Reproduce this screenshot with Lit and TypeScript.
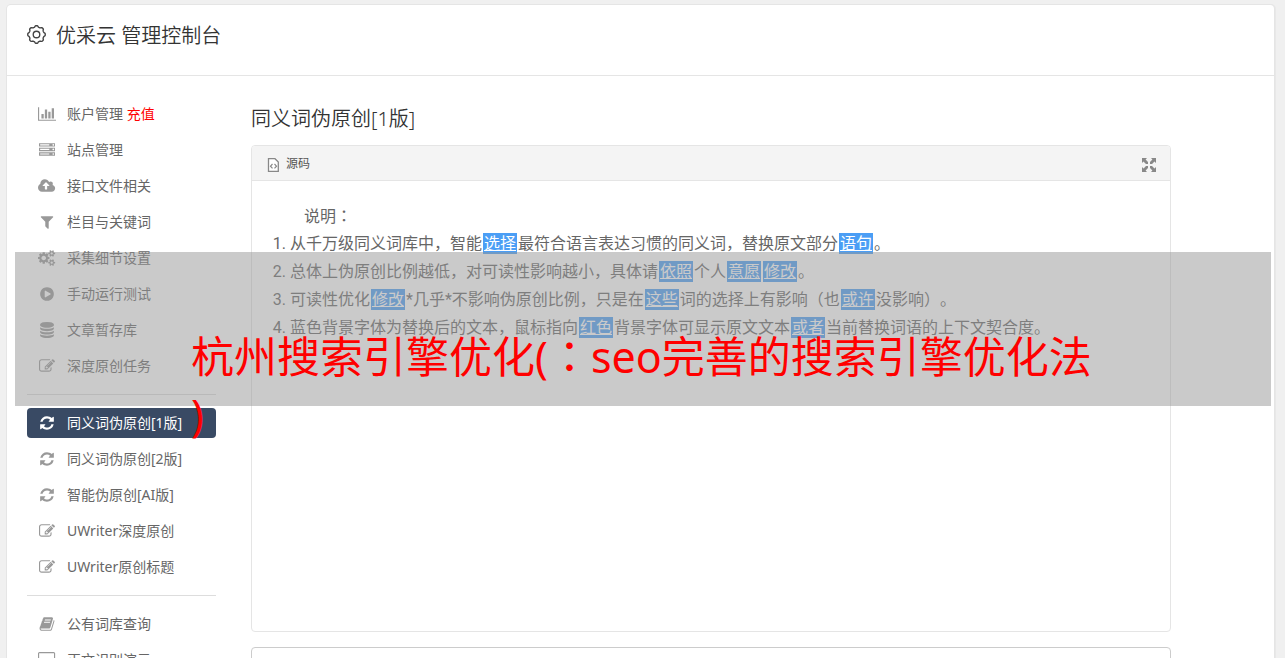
import { LitElement, html, svg, css } from "lit";
import { customElement, property } from "lit/decorators.js";

interface Glyph {
  w: number;
  d: string;
}

const GLYPHS: Record<string, Glyph> = {
  chart: {
    w: 2048,
    d: "M640 896v512h-256v-512h256zm384-512v1024h-256v-1024h256zm1024 1152v128h-2048v-1536h128v1408h1920zm-640-896v768h-256v-768h256zm384-384v1152h-256v-1152h256z",
  },
  server: {
    w: 1792,
    d: "M128 1408h1024v-128h-1024v128zm0-512h1024v-128h-1024v128zm1568 448q0-40-28-68t-68-28-68 28-28 68 28 68 68 28 68-28 28-68zm-1568-960h1024v-128h-1024v128zm1568 448q0-40-28-68t-68-28-68 28-28 68 28 68 68 28 68-28 28-68zm0-512q0-40-28-68t-68-28-68 28-28 68 28 68 68 28 68-28 28-68zm96 832v384h-1792v-384h1792zm0-512v384h-1792v-384h1792zm0-512v384h-1792v-384h1792z",
  },
  cloud: {
    w: 1920,
    d: "M1280 864q0-14-9-23l-352-352q-9-9-23-9t-23 9l-351 351q-10 12-10 24 0 14 9 23t23 9h224v352q0 13 9.5 22.5t22.5 9.5h192q13 0 22.5-9.5t9.5-22.5v-352h224q13 0 22.5-9.5t9.5-22.5zm640 288q0 159-112.5 271.5t-271.5 112.5h-1088q-185 0-316.5-131.5t-131.5-316.5q0-130 70-240t188-165q-2-30-2-43 0-212 150-362t362-150q156 0 285.5 87t188.5 231q71-62 166-62 106 0 181 75t75 181q0 76-41 138 130 31 213.5 135.5t83.5 238.5z",
  },
  filter: {
    w: 1792,
    d: "M1595 295q17 41-14 70l-493 493v742q0 42-39 59-13 5-25 5-27 0-45-19l-256-256q-19-19-19-45v-486l-493-493q-31-29-14-70 17-39 59-39h1280q42 0 59 39z",
  },
  cogs: {
    w: 1920,
    d: "M896 896q0-106-75-181t-181-75-181 75-75 181 75 181 181 75 181-75 75-181zm768 512q0-52-38-90t-90-38-90 38-38 90q0 53 37.5 90.5t90.5 37.5 90.5-37.5 37.5-90.5zm0-1024q0-52-38-90t-90-38-90 38-38 90q0 53 37.5 90.5t90.5 37.5 90.5-37.5 37.5-90.5zm-384 421v185q0 10-7 19.5t-16 10.5l-155 24q-11 35-32 76 34 48 90 115 7 11 7 20 0 12-7 19-23 30-82.5 89.5t-78.5 59.5q-11 0-21-7l-115-90q-37 19-77 31-11 108-23 155-7 24-30 24h-186q-11 0-20-7.5t-10-17.5l-23-153q-34-10-75-31l-118 89q-7 7-20 7-11 0-21-8-144-133-144-160 0-9 7-19 10-14 41-53t47-61q-23-44-35-82l-152-24q-10-1-17-9.5t-7-19.5v-185q0-10 7-19.5t16-10.5l155-24q11-35 32-76-34-48-90-115-7-11-7-20 0-12 7-20 22-30 82-89t79-59q11 0 21 7l115 90q34-18 77-32 11-108 23-154 7-24 30-24h186q11 0 20 7.5t10 17.5l23 153q34 10 75 31l118-89q8-7 20-7 11 0 21 8 144 133 144 160 0 8-7 19-12 16-42 54t-45 60q23 48 34 82l152 23q10 2 17 10.5t7 19.5zm640 533v140q0 16-149 31-12 27-30 52 51 113 51 138 0 4-4 7-122 71-124 71-8 0-46-47t-52-68q-20 2-30 2t-30-2q-14 21-52 68t-46 47q-2 0-124-71-4-3-4-7 0-25 51-138-18-25-30-52-149-15-149-31v-140q0-16 149-31 13-29 30-52-51-113-51-138 0-4 4-7 4-2 35-20t59-34 30-16q8 0 46 46.5t52 67.5q20-2 30-2t30 2q51-71 92-112l6-2q4 0 124 70 4 3 4 7 0 25-51 138 17 23 30 52 149 15 149 31zm0-1024v140q0 16-149 31-12 27-30 52 51 113 51 138 0 4-4 7-122 71-124 71-8 0-46-47t-52-68q-20 2-30 2t-30-2q-14 21-52 68t-46 47q-2 0-124-71-4-3-4-7 0-25 51-138-18-25-30-52-149-15-149-31v-140q0-16 149-31 13-29 30-52-51-113-51-138 0-4 4-7 4-2 35-20t59-34 30-16q8 0 46 46.5t52 67.5q20-2 30-2t30 2q51-71 92-112l6-2q4 0 124 70 4 3 4 7 0 25-51 138 17 23 30 52 149 15 149 31z",
  },
  play: {
    w: 1792,
    d: "M896 128q209 0 385.5 103t279.5 279.5 103 385.5-103 385.5-279.5 279.5-385.5 103-385.5-103-279.5-279.5-103-385.5 103-385.5 279.5-279.5 385.5-103zm384 823q32-18 32-55t-32-55l-544-320q-31-19-64-1-32 19-32 56v640q0 37 32 56 16 8 32 8 17 0 32-9z",
  },
  database: {
    w: 1792,
    d: "M896 768q237 0 443-43t325-127v170q0 69-103 128t-280 93.5-385 34.5-385-34.5-280-93.5-103-128v-170q119 84 325 127t443 43zm0 768q237 0 443-43t325-127v170q0 69-103 128t-280 93.5-385 34.5-385-34.5-280-93.5-103-128v-170q119 84 325 127t443 43zm0-384q237 0 443-43t325-127v170q0 69-103 128t-280 93.5-385 34.5-385-34.5-280-93.5-103-128v-170q119 84 325 127t443 43zm0-1152q208 0 385 34.5t280 93.5 103 128v128q0 69-103 128t-280 93.5-385 34.5-385-34.5-280-93.5-103-128v-128q0-69 103-128t280-93.5 385-34.5z",
  },
  edit: {
    w: 1792,
    d: "M888 1184l116-116-152-152-116 116v56h96v96h56zm440-720q-16-16-33 1l-350 350q-17 17-1 33t33-1l350-350q17-17 1-33zm80 594v190q0 119-84.5 203.5t-203.5 84.5h-832q-119 0-203.5-84.5t-84.5-203.5v-832q0-119 84.5-203.5t203.5-84.5h832q63 0 117 25 15 7 18 23 3 17-9 29l-49 49q-14 14-32 8-23-6-45-6h-832q-66 0-113 47t-47 113v832q0 66 47 113t113 47h832q66 0 113-47t47-113v-126q0-13 9-22l64-64q15-15 35-7t20 29zm-96-738l288 288-672 672h-288v-288zm444 132l-92 92-288-288 92-92q28-28 68-28t68 28l152 152q28 28 28 68t-28 68z",
  },
  refresh: {
    w: 1792,
    d: "M1639 1056q0 5-1 7-64 268-268 434.5t-478 166.5q-146 0-282.5-55t-243.5-157l-129 129q-19 19-45 19t-45-19-19-45v-448q0-26 19-45t45-19h448q26 0 45 19t19 45-19 45l-137 137q71 66 161 102t187 36q134 0 250-65t186-179q11-17 53-117 8-23 30-23h192q13 0 22.5 9.5t9.5 22.5zm25-800v448q0 26-19 45t-45 19h-448q-26 0-45-19t-19-45 19-45l138-138q-148-137-349-137-134 0-250 65t-186 179q-11 17-53 117-8 23-30 23h-199q-13 0-22.5-9.5t-9.5-22.5v-7q65-268 270-434.5t480-166.5q146 0 284 55.5t245 156.5l130-129q19-19 45-19t45 19 19 45z",
  },
  book: {
    w: 1792,
    d: "M1703 478q40 57 18 129l-275 906q-19 64-76.5 107.5t-122.5 43.5h-923q-77 0-148.5-53.5t-99.5-131.5q-24-67-2-127 0-4 3-27t4-37q1-8-3-21.5t-3-19.5q2-11 8-21t16.5-23.5 16.5-23.5q23-38 45-91.5t30-91.5q3-10 .5-30t-.5-28q3-11 17-28t17-23q21-36 42-92t25-90q1-9-2.5-32t.5-28q4-13 22-30.5t22-22.5q19-26 42.5-84.5t27.5-96.5q1-8-3-25.5t-2-26.5q2-8 9-18t18-23 17-21q8-12 16.5-30.5t15-35 16-36 19.5-32 26.5-23.5 36-11.5 47.5 5.5l-1 3q38-9 51-9h761q74 0 114 56t18 130l-274 906q-36 119-71.5 153.5t-128.5 34.5h-869q-27 0-38 15-11 16-1 43 24 70 144 70h923q29 0 56-15.5t35-41.5l300-987q7-22 5-57 38 15 59 43zm-1064 2q-4 13 2 22.5t20 9.5h608q13 0 25.5-9.5t16.5-22.5l21-64q4-13-2-22.5t-20-9.5h-608q-13 0-25.5 9.5t-16.5 22.5zm-83 256q-4 13 2 22.5t20 9.5h608q13 0 25.5-9.5t16.5-22.5l21-64q4-13-2-22.5t-20-9.5h-608q-13 0-25.5 9.5t-16.5 22.5z",
  },
  desktop: {
    w: 1920,
    d: "M1792 992v-832q0-13-9.500-22.500t-22.500-9.500h-1600q-13 0-22.500 9.500t-9.500 22.500v832q0 13 9.500 22.500t22.500 9.500h1600q13 0 22.500-9.500t9.500-22.500zm128-832v1088q0 66-47 113t-113 47h-544q0 37 16 77.500t32 71 16 43.500q0 26-19 45t-45 19h-512q-26 0-45-19t-19-45q0-14 16-44t32-70 16-78h-544q-66 0-113-47t-47-113v-1088q0-66 47-113t113-47h1600q66 0 113 47t47 113z",
  },
};

@customElement("menu-icon")
class MenuIcon extends LitElement {
  @property() name = "chart";

  static styles = css`
    :host {
      display: flex;
      justify-content: center;
      align-items: center;
      width: 20px;
      height: 16px;
    }
    svg {
      display: block;
      height: 16px;
      fill: currentColor;
    }
  `;

  render() {
    const g = GLYPHS[this.name];
    return html`<svg viewBox="0 0 ${g.w} 1792" aria-hidden="true">${svg`<path d=${g.d}></path>`}</svg>`;
  }
}

interface Entry {
  icon: string;
  label: string;
  extra?: string;
  active?: boolean;
}

const MENU: Entry[][] = [
  [
    { icon: "chart", label: "账户管理", extra: "充值" },
    { icon: "server", label: "站点管理" },
    { icon: "cloud", label: "接口文件相关" },
    { icon: "filter", label: "栏目与关键词" },
    { icon: "cogs", label: "采集细节设置" },
    { icon: "play", label: "手动运行测试" },
    { icon: "database", label: "文章暂存库" },
    { icon: "edit", label: "深度原创任务" },
  ],
  [
    { icon: "refresh", label: "同义词伪原创[1版]", active: true },
    { icon: "refresh", label: "同义词伪原创[2版]" },
    { icon: "refresh", label: "智能伪原创[AI版]" },
    { icon: "edit", label: "UWriter深度原创" },
    { icon: "edit", label: "UWriter原创标题" },
  ],
  [
    { icon: "book", label: "公有词库查询" },
    { icon: "desktop", label: "正文识别演示" },
  ],
];

/* Odd-numbered pieces of each line are the replaced words. */
const NOTES: string[][] = [
  ["从千万级同义词库中，智能", "选择", "最符合语言表达习惯的同义词，替换原文部分", "语句", "。"],
  ["总体上伪原创比例越低，对可读性影响越小，具体请", "依照", "个人", "意愿", "", "修改", "。"],
  ["可读性优化", "修改", "*几乎*不影响伪原创比例，只是在", "这些", "词的选择上有影响（也", "或许", "没影响）。"],
  ["蓝色背景字体为替换后的文本，鼠标指向", "红色", "背景字体可显示原文文本", "或者", "当前替换词语的上下文契合度。"],
];

/* Outline of the title gear: eight shallow lobes round a ring. */
function gearPath(): string {
  const pts: string[] = [];
  for (let i = 0; i < 96; i++) {
    const a = (i / 96) * Math.PI * 2;
    const r = 7.7 + 0.6 * Math.tanh(2.2 * Math.cos(8 * a));
    pts.push(`${(9 + r * Math.cos(a)).toFixed(2)} ${(9 + r * Math.sin(a)).toFixed(2)}`);
  }
  return `M${pts.join("L")}Z`;
}

@customElement("app-root")
class AppRoot extends LitElement {
  static styles = css`
    :host {
      display: block;
      position: relative;
      height: 100vh;
      overflow: hidden;
      box-sizing: border-box;
      padding: 5px 11px 0 7px;
      background: #f0f0f0;
      color: #666;
      font-family: "Noto Sans", "Noto Sans CJK SC", sans-serif;
      font-size: 14px;
      text-spacing-trim: space-all;
    }
    .card {
      min-height: 100vh;
      background: #fff;
      border-radius: 4px;
      box-shadow: 0 0 0 1px #e5e5e5, 1px 0 0 1px #e8e8e8;
    }
    .top {
      display: flex;
      align-items: flex-start;
      gap: 10px;
      padding: 16px 20px 24px;
      border-bottom: 1px solid #e5e5e5;
      color: #333;
    }
    .gear {
      width: 19px;
      height: 19px;
      margin-top: 4px;
      fill: none;
      stroke: #444;
    }
    h1,
    h2 {
      margin: 0;
      font-size: 20px;
      font-weight: 350;
      color: #333;
    }
    h1 {
      line-height: 30px;
    }
    h2 {
      margin-bottom: 11px;
      line-height: 30px;
    }
    .body {
      display: flex;
      gap: 35px;
      padding: 23px 103px 20px 20px;
    }
    nav {
      flex: 0 0 189px;
    }
    ul.group {
      display: flex;
      flex-direction: column;
      gap: 6px;
      margin: 0;
      padding: 0;
      list-style: none;
    }
    .group + .group {
      margin-top: 13px;
      padding-top: 13px;
      border-top: 1px solid #ddd;
    }
    .item {
      display: flex;
      align-items: center;
      gap: 10px;
      height: 30px;
      padding: 0 10px;
      border-radius: 4px;
      color: #666;
      line-height: 30px;
      text-decoration: none;
      white-space: nowrap;
    }
    .item menu-icon {
      color: #999;
    }
    .item.active,
    .item.active menu-icon {
      color: #fff;
    }
    .item.active {
      background: #394a64;
    }
    .extra {
      color: #f00;
    }
    main {
      flex: 1;
      min-width: 0;
      padding-top: 5px;
    }
    .editor {
      border: 1px solid #e5e5e5;
      border-radius: 4px;
      overflow: hidden;
    }
    .bar {
      display: flex;
      justify-content: space-between;
      align-items: center;
      height: 34px;
      padding: 0 14px;
      border-bottom: 1px solid #e5e5e5;
      background: #f4f4f4;
    }
    .bar button {
      display: flex;
      align-items: center;
      gap: 6px;
      padding: 0;
      border: 0;
      background: none;
      color: #555;
      font: inherit;
      font-size: 12px;
    }
    .source,
    .expand {
      width: 14px;
      height: 14px;
      margin-top: 3px;
    }
    .text {
      min-height: 410px;
      padding: 20px;
      font-size: 16px;
      line-height: 28px;
    }
    .text p {
      margin: 0;
      text-indent: 32px;
    }
    .text ol {
      margin: 0;
      padding-left: 18px;
      font-family: Roboto, "Noto Sans CJK SC", sans-serif;
    }
    .mid {
      font-family: "Noto Sans CJK TC", sans-serif;
    }
    .swap {
      display: inline-block;
      margin: 0 1px;
      padding: 0 1px;
      background: #4b9ef5;
      color: #fff;
      line-height: 21px;
      text-decoration: underline;
    }
    textarea {
      display: block;
      box-sizing: border-box;
      width: 100%;
      height: 120px;
      margin-top: 15px;
      border: 1px solid #ccc;
      border-radius: 4px;
      resize: none;
    }
    .banner {
      position: absolute;
      top: 252px;
      left: 15px;
      right: 14px;
      box-sizing: border-box;
      height: 154px;
      padding: 73px 0 0 176px;
      background: rgba(150, 150, 150, 0.5);
      color: #f00;
      font-size: 43px;
      line-height: 58px;
      white-space: nowrap;
      pointer-events: none;
    }
  `;

  private note(parts: string[]) {
    return html`<li>${parts.map((p, i) => (i % 2 ? html`<span class="swap">${p}</span>` : p))}</li>`;
  }

  render() {
    return html`
      <div class="card">
        <header class="top">
          <svg class="gear" viewBox="0 0 18 18" aria-hidden="true">
            <path d=${gearPath()} stroke-width="1.3"></path>
            <circle cx="9" cy="9" r="3.100" stroke-width="1.3"></circle>
          </svg>
          <h1>优采云 管理控制台</h1>
        </header>
        <div class="body">
          <nav>
            ${MENU.map(
              (g) => html`<ul class="group">
                ${g.map(
                  (e) => html`<li>
                    <a class="item ${e.active ? "active" : ""}" href="#"
                      ><menu-icon name=${e.icon}></menu-icon
                      ><span>${e.label}${e.extra ? html` <span class="extra">${e.extra}</span>` : ""}</span></a
                    >
                  </li>`
                )}
              </ul>`
            )}
          </nav>
          <main>
            <h2>同义词伪原创[1版]</h2>
            <section class="editor">
              <div class="bar">
                <button type="button">
                  <svg class="source" viewBox="0 0 14 14" aria-hidden="true">
                    <path d="M2.500 .7H9L12.300 4V13.300H2.500Z" fill="#fff" stroke="#888" stroke-width="1.300"></path>
                    <path d="M6.500 6L4.500 8.200L6.500 10.400M8.500 6L10.500 8.200L8.500 10.400" fill="none" stroke="#888" stroke-width="1.200"></path>
                  </svg>
                  源码
                </button>
                <button type="button" aria-label="最大化">
                  <svg class="expand" viewBox="0 0 14 14" fill="#888" aria-hidden="true">
                    <path d="M0 0H5L3.600 1.500L6 4V6H4L1.500 3.600L0 5Z"></path>
                    <path d="M14 0H9L10.400 1.500L8 4V6H10L12.500 3.600L14 5Z"></path>
                    <path d="M0 14H5L3.600 12.500L6 10V8H4L1.500 10.400L0 9Z"></path>
                    <path d="M14 14H9L10.400 12.500L8 10V8H10L12.500 10.400L14 9Z"></path>
                  </svg>
                </button>
              </div>
              <div class="text">
                <p>说明<span class="mid">：</span></p>
                <ol>
                  ${NOTES.map((n) => this.note(n))}
                </ol>
              </div>
            </section>
            <textarea aria-label="原文"></textarea>
          </main>
        </div>
      </div>
      <div class="banner">杭州搜索引擎优化(<span class="mid">：</span>seo完善的搜索引擎优化法<br />)</div>
    `;
  }
}
